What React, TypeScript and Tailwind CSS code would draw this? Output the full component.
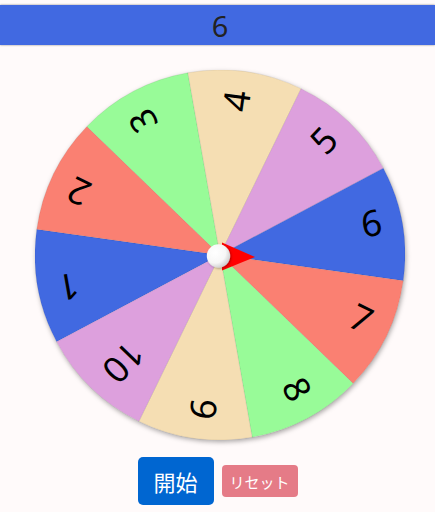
import React from 'react';

const COLORS = ['#4169E1', '#FA8072', '#98FB98', '#F5DEB3', '#DDA0DD'];
const R = 185;
const START = 152; // degrees, clockwise from east
const ARC = 36;

function pt(deg: number, r: number) {
  const a = (deg * Math.PI) / 180;
  return `${(r * Math.cos(a)).toFixed(2)},${(r * Math.sin(a)).toFixed(2)}`;
}

function Wheel() {
  const segs = Array.from({ length: 10 }, (_, i) => {
    const a1 = START + ARC * i;
    const a2 = a1 + ARC;
    return { label: String(i + 1), color: COLORS[i % 5], a1, a2, mid: a1 + ARC / 2 };
  });

  return (
    <svg width={370} height={370} viewBox="-185 -185 370 370" className="block">
      <defs>
        <radialGradient id="knob" cx="35%" cy="35%" r="75%">
          <stop offset="0%" stopColor="#ffffff" />
          <stop offset="60%" stopColor="#f7f7f7" />
          <stop offset="100%" stopColor="#c4c4c4" />
        </radialGradient>
        <filter id="knobShadow" x="-50%" y="-50%" width="200%" height="200%">
          <feDropShadow dx="1" dy="1" stdDeviation="1.2" floodColor="#000" floodOpacity="0.3" />
        </filter>
      </defs>
      {segs.map((s) => (
        <path
          key={s.label}
          d={`M0,0 L${pt(s.a1, R)} A${R},${R} 0 0 1 ${pt(s.a2, R)} Z`}
          fill={s.color}
          stroke="rgba(0,0,0,0.12)"
          strokeWidth={0.6}
        />
      ))}
      {segs.map((s) => (
        <g key={`t${s.label}`} transform={`rotate(${s.mid})`}>
          <text
            x={165}
            y={8}
            textAnchor="end"
            fill="#000"
            style={{ fontFamily: '"Noto Sans", sans-serif', fontSize: 36 }}
          >
            {s.label}
          </text>
        </g>
      ))}
      <polygon points="2,-12.5 35,2 2,15.5" fill="#ff0000" />
      <circle cx={-1.5} cy={1} r={11.7} fill="url(#knob)" filter="url(#knobShadow)" />
    </svg>
  );
}

export default function App() {
  return (
    <div className="min-h-screen bg-[#fffafa] pt-[5px]" style={{ fontFamily: '"Noto Sans", sans-serif' }}>
      <div className="h-10 bg-[#4169E1] shadow-[0_0_2px_rgba(0,0,0,0.45)] flex items-center justify-center pl-[5px]">
        <span className="text-[29px] leading-none text-[#222]">6</span>
      </div>

      <div className="flex justify-center pl-[5px] mt-[25px]">
        <div className="rounded-full shadow-[1px_2px_5px_rgba(0,0,0,0.35)]">
          <Wheel />
        </div>
      </div>

      <div
        className="flex items-center justify-center gap-2 mt-[17px]"
        style={{ fontFamily: '"Noto Sans CJK JP", "Noto Sans", sans-serif' }}
      >
        <button
          type="button"
          className="w-[76px] h-[48px] rounded-[5px] bg-[#0066d1] text-white text-[22px] leading-none"
        >
          開始
        </button>
        <button
          type="button"
          className="w-[76px] h-[32px] rounded-[4px] bg-[#e57b87] text-white text-[15px] leading-none"
        >
          リセット
        </button>
      </div>
    </div>
  );
}
